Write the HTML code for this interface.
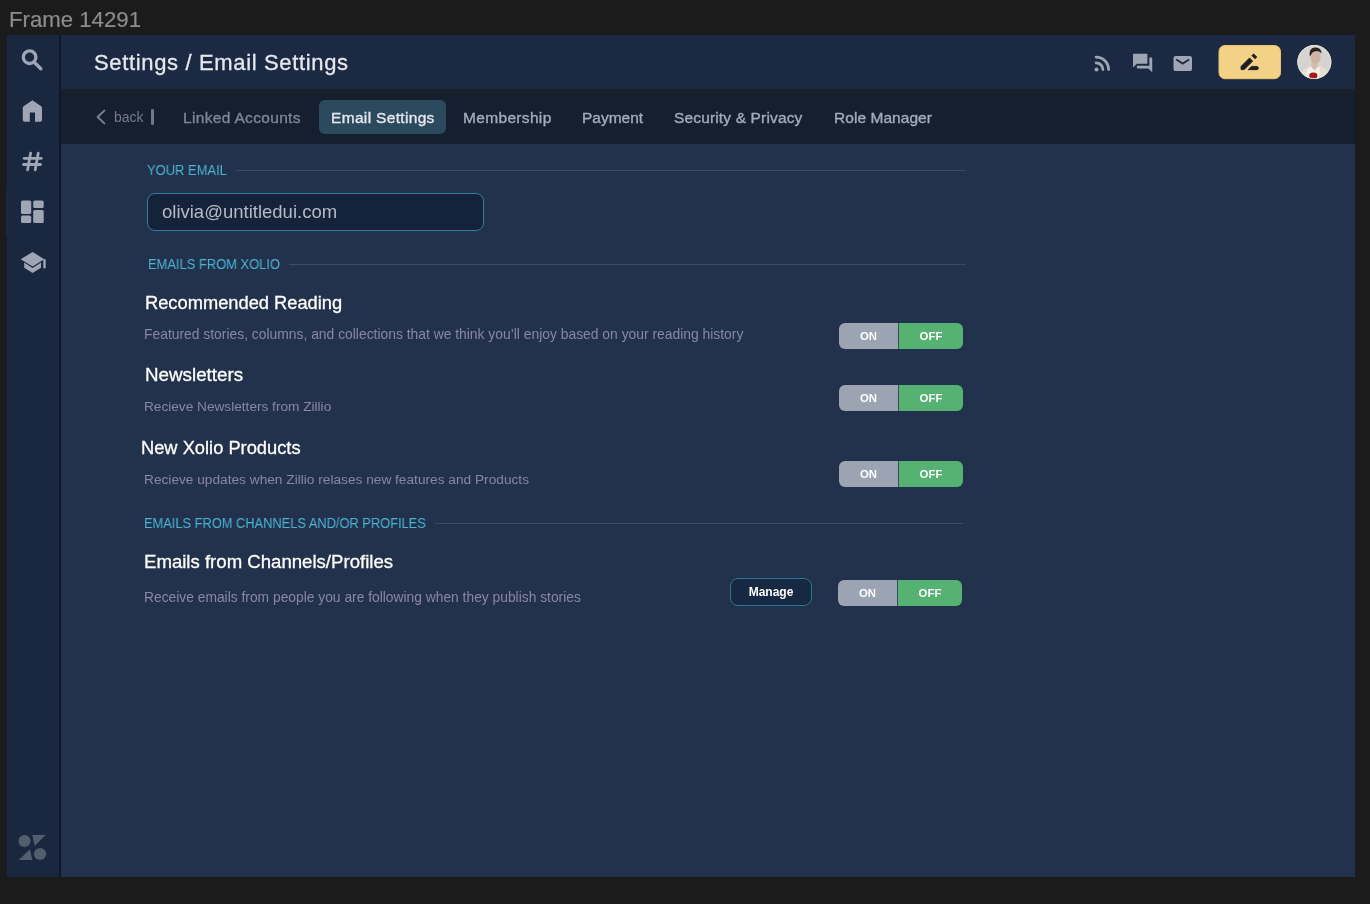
<!DOCTYPE html>
<html><head><meta charset="utf-8">
<style>
*{margin:0;padding:0;box-sizing:border-box}
html,body{width:1370px;height:904px;overflow:hidden;background:#1b1b1b;font-family:"Liberation Sans",sans-serif;-webkit-font-smoothing:antialiased}
.a{position:absolute}
.t{position:absolute;white-space:nowrap;line-height:1;will-change:transform}
#side{left:7px;top:35px;width:52px;height:842px;background:#1a283f}
#sbord{left:59px;top:35px;width:2px;height:842px;background:#0f1828}
#head{left:61px;top:35px;width:1294px;height:53px;background:#1b2a42}
#tabs{left:61px;top:88px;width:1294px;height:56px;background:#161f2e;border-top:1px solid #222a38}
#cont{left:61px;top:144px;width:1294px;height:733px;background:#22324d}
.tab{color:#a3acbd;font-size:15.5px;letter-spacing:0.33px;-webkit-text-stroke:0.35px currentColor}
.lbl{color:#4cb3d5;font-size:14px;transform-origin:0 0;transform:scaleX(0.925)}
.line{height:1px;background:#3f4b5f}
.h{color:#ffffff;font-size:18.3px;-webkit-text-stroke:0.3px #fff}
.d{color:#8a85aa;font-size:13.7px}
.tg{position:absolute;width:124px;height:26px;border-radius:6px;overflow:hidden;will-change:transform}
.tg .on{position:absolute;left:0;top:0;width:59px;height:26px;background:#9ca3b3;color:#fff;font-weight:700;font-size:11.4px;line-height:27px;text-align:center}
.tg .off{position:absolute;left:60px;top:0;width:64px;height:26px;background:#55b272;color:#fff;font-weight:700;font-size:11.4px;line-height:27px;text-align:center}
.tg .dv{position:absolute;left:59px;top:0;width:1px;height:26px;background:#3b4a5c}
</style></head><body>
<div class="t" style="left:8.6px;top:9px;font-size:22.2px;color:#8c8c8c;-webkit-text-stroke:0.2px #8c8c8c">Frame 14291</div>
<div id="side" class="a"></div>
<div class="a" style="left:6px;top:186px;width:1px;height:51px;background:#1a283f"></div>
<div id="sbord" class="a"></div>
<div id="head" class="a"></div>
<div id="tabs" class="a"></div>
<div id="cont" class="a"></div>

<!-- title -->
<div class="t" style="left:94px;top:51.7px;font-size:22px;letter-spacing:0.65px;color:#e6e8ee;-webkit-text-stroke:0.3px #e6e8ee">Settings / Email Settings</div>

<!-- tabs -->
<div class="t" style="left:113.5px;top:109.5px;font-size:14px;color:#737b8c">back</div>
<div class="a" style="left:151.3px;top:108.8px;width:2.4px;height:16.6px;background:#6f7789;border-radius:1.2px"></div>
<div class="t tab" style="left:183px;top:110.1px;color:#7d8699">Linked Accounts</div>
<div class="a" style="left:319px;top:100px;width:127px;height:34px;background:#2c4a5e;border-radius:6px"></div>
<div class="t tab" style="left:331px;top:110.1px;color:#e6e8ee">Email Settings</div>
<div class="t tab" style="left:463px;top:110.1px">Membership</div>
<div class="t tab" style="left:582px;top:110.1px;letter-spacing:0px">Payment</div>
<div class="t tab" style="left:674px;top:110.1px;letter-spacing:0.15px">Security &amp; Privacy</div>
<div class="t tab" style="left:834px;top:110.1px;letter-spacing:0.05px">Role Manager</div>

<!-- content -->
<div class="t lbl" style="left:147px;top:163.3px">YOUR EMAIL</div>
<div class="a line" style="left:236px;top:170px;width:730px"></div>
<div class="a" style="left:147px;top:193px;width:337px;height:38px;border:1.2px solid #317f9d;border-radius:8px;background:#14223a"></div>
<div class="t" style="left:162px;top:203px;font-size:18.5px;color:#b4bac6">olivia@untitledui.com</div>

<div class="t lbl" style="left:147.5px;top:257px;transform:scaleX(0.922)">EMAILS FROM XOLIO</div>
<div class="a line" style="left:289px;top:264px;width:677px"></div>

<div class="t h" style="left:145px;top:294px">Recommended Reading</div>
<div class="t d" style="left:144px;top:328.2px;font-size:13.87px">Featured stories, columns, and collections that we think you’ll enjoy based on your reading history</div>
<div class="tg" style="left:839px;top:323px"><div class="on">ON</div><div class="dv"></div><div class="off">OFF</div></div>

<div class="t h" style="left:145px;top:365.6px;font-size:18.8px">Newsletters</div>
<div class="t d" style="left:144px;top:399.7px;font-size:13.65px">Recieve Newsletters from Zillio</div>
<div class="tg" style="left:839px;top:385px"><div class="on">ON</div><div class="dv"></div><div class="off">OFF</div></div>

<div class="t h" style="left:141px;top:438.5px">New Xolio Products</div>
<div class="t d" style="left:144px;top:472.7px">Recieve updates when Zillio relases new features and Products</div>
<div class="tg" style="left:839px;top:461px"><div class="on">ON</div><div class="dv"></div><div class="off">OFF</div></div>

<div class="t lbl" style="left:144px;top:516px;transform:scaleX(0.917)">EMAILS FROM CHANNELS AND/OR PROFILES</div>
<div class="a line" style="left:435px;top:523px;width:528px"></div>

<div class="t h" style="left:144px;top:552.5px;font-size:18.6px">Emails from Channels/Profiles</div>
<div class="t d" style="left:144px;top:591.2px;font-size:13.82px">Receive emails from people you are following when they publish stories</div>
<div class="a" style="left:730px;top:578px;width:82px;height:27.5px;border:1.4px solid #2f7590;border-radius:8px;background:#172842;color:#fff;font-weight:700;font-size:12px;line-height:27.5px;text-align:center;will-change:transform">Manage</div>
<div class="tg" style="left:838px;top:580px"><div class="on">ON</div><div class="dv"></div><div class="off">OFF</div></div>


<svg class="a" style="left:0;top:0" width="1370" height="904" viewBox="0 0 1370 904">
 <g fill="#9ea6b6" stroke="none">
  <!-- search -->
  <circle cx="29.6" cy="57.2" r="6.3" fill="none" stroke="#9ea6b6" stroke-width="3.3"/>
  <line x1="34.5" y1="62.5" x2="40.8" y2="68.8" stroke="#9ea6b6" stroke-width="3.4" stroke-linecap="round"/>
  <!-- home -->
  <path d="M32.4 100.2 L41.2 106.2 Q42 106.8 42 107.8 L42 119.9 Q42 121.7 40.2 121.7 L35 121.7 L35 112.6 L29.8 112.6 L29.8 121.7 L24.6 121.7 Q22.8 121.7 22.8 119.9 L22.8 107.8 Q22.8 106.8 23.6 106.2 Z"/>
  <!-- hash -->
  <g stroke="#9ea6b6" stroke-width="2.8" stroke-linecap="round">
   <line x1="30.6" y1="153.2" x2="27.6" y2="169.8"/>
   <line x1="38.2" y1="153.2" x2="35.2" y2="169.8"/>
   <line x1="24.2" y1="158.3" x2="41.2" y2="158.3"/>
   <line x1="23.5" y1="164.5" x2="40.5" y2="164.5"/>
  </g>
  <!-- dashboard -->
  <rect x="21" y="200.6" width="10.2" height="13.5" rx="1.6"/>
  <rect x="21" y="215.6" width="10.2" height="7.5" rx="1.6"/>
  <rect x="33.2" y="200.6" width="10.5" height="7.5" rx="1.6"/>
  <rect x="33.2" y="210" width="10.5" height="13.1" rx="1.6"/>
  <!-- school -->
  <path d="M32.6 252 L20.7 259.2 L32.6 266.6 L44.2 259.2 Z"/>
  <path d="M24.2 262.6 L24.2 267.8 L32.6 272.9 L41 267.8 L41 262.6 L32.6 267.9 Z"/>
  <rect x="43.3" y="259" width="2.4" height="9.6" rx="1.1"/>
  <!-- header icons -->
  <g fill="none" stroke="#9ea6b6" stroke-width="2.8" stroke-linecap="round">
   <path d="M1096.1 57.1 A12.5 12.5 0 0 1 1108.6 69.6"/>
   <path d="M1096.1 62.8 A6.8 6.8 0 0 1 1102.9 69.6"/>
  </g>
  <circle cx="1096.5" cy="69.4" r="2"/>
  <g transform="translate(1131.1 51.9) scale(0.96 0.92)">
   <path d="M21 6h-2v9H6v2c0 .55.45 1 1 1h11l4 4V7c0-.55-.45-1-1-1zm-4 6V3c0-.55-.45-1-1-1H3c-.55 0-1 .45-1 1v14l4-4h10c.55 0 1-.45 1-1z"/>
  </g>
  <rect x="1173.5" y="55.9" width="18.5" height="15.2" rx="2.2"/>
  <polyline points="1176.3,59.6 1182.7,63.6 1189.1,59.6" fill="none" stroke="#1b2a42" stroke-width="1.8"/>
 </g>
 <!-- edit button -->
 <rect x="1219" y="45.5" width="61.5" height="33.2" rx="6" fill="#f3d287" stroke="#ebc46a" stroke-width="1"/>
 <g fill="#1c1d24" stroke="#1c1d24" stroke-width="0.8" stroke-linejoin="round">
  <path d="M1249.5 57.9 L1241 66.4 L1241 69.6 L1244.2 69.6 L1252.7 61.1 Z"/>
  <path d="M1256.8 57.1 L1253.7 53.9 L1251.8 55.6 L1255 58.8 Z"/>
  <path d="M1251.4 66.4 L1257.2 66.4 A1.75 1.75 0 0 1 1257.2 69.7 L1248.1 69.7 Z"/>
 </g>
 <!-- avatar -->
 <defs><clipPath id="av"><circle cx="1314.35" cy="62" r="16.9"/></clipPath></defs>
 <g clip-path="url(#av)">
  <rect x="1297" y="45" width="35" height="35" fill="#d6d4d0"/>
  <path d="M1300 80 L1301 73 Q1304 68 1310 66.5 L1320 66 Q1326 68 1328 72 L1330 80 Z" fill="#e6dfd0"/>
  <path d="M1305.5 80 L1307 70 Q1310 67 1312 66 L1314.5 70 L1317.5 66 Q1319.5 67.5 1320 70 L1319 80 Z" fill="#f3f1ec"/>
  <path d="M1311.5 61 L1317.5 61 L1317.8 67 L1314.5 70.5 L1311.2 67 Z" fill="#d6beaf"/>
  <ellipse cx="1315.6" cy="57" rx="5" ry="6.6" fill="#cfb3a3"/>
  <path d="M1309.8 56.5 Q1308.6 48.2 1314.6 47.6 Q1321.4 47.4 1321.6 53.5 Q1320 51.2 1316.5 51 Q1312 51.4 1311 55 Z" fill="#2c2321"/>
  <ellipse cx="1313.3" cy="75.8" rx="4.1" ry="3.2" fill="#a51819"/>
 </g>
 <circle cx="1314.35" cy="62" r="16.6" fill="none" stroke="#e8e4dc" stroke-width="0.9"/>
 <!-- chevron back -->
 <polyline points="104.4,110.6 97.6,117 104.4,123.4" fill="none" stroke="#7a8293" stroke-width="1.9" stroke-linecap="round" stroke-linejoin="round"/>
 <!-- logo -->
 <g fill="#525d6e">
  <circle cx="24.5" cy="841" r="6.1"/>
  <circle cx="40.1" cy="854" r="6.1"/>
  <path d="M32.3 835 L45.5 835 L34.7 846 Z"/>
  <path d="M29.9 849.3 L32.4 860 L18.7 860 Z"/>
 </g>
</svg>
</body></html>
